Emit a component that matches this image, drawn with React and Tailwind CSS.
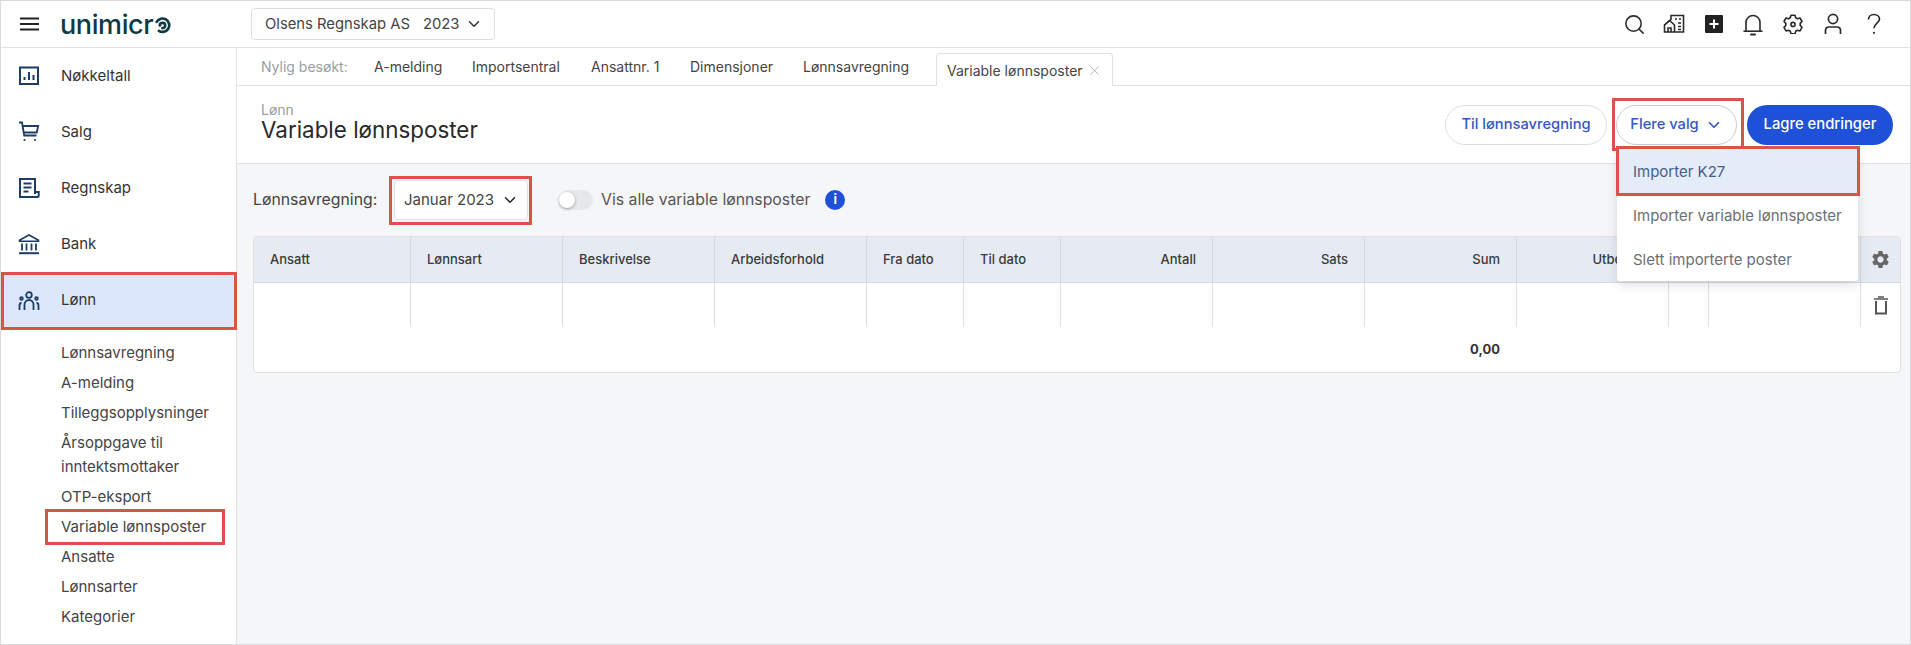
import { ChevronDown, Search, X } from "lucide-react";
import { MdSettings } from "react-icons/md";

const NAVY = "#1c3d66";

const RECENT = [
  { label: "A-melding", cls: "w-[98px]" },
  { label: "Importsentral", cls: "w-[119px]" },
  { label: "Ansattnr. 1", cls: "w-[99px]" },
  { label: "Dimensjoner", cls: "w-[113px]" },
  { label: "Lønnsavregning", cls: "w-[133px]" },
];

const COLUMNS = [
  { label: "Ansatt", cls: "w-[157px]" },
  { label: "Lønnsart", cls: "w-[152px]" },
  { label: "Beskrivelse", cls: "w-[152px]" },
  { label: "Arbeidsforhold", cls: "w-[152px]" },
  { label: "Fra dato", cls: "w-[97px]" },
  { label: "Til dato", cls: "w-[97px]" },
  { label: "Antall", cls: "w-[152px]", right: true },
  { label: "Sats", cls: "w-[152px]", right: true },
  { label: "Sum", cls: "w-[152px]", right: true },
  { label: "Utbetales", cls: "w-[152px]", right: true },
  { label: "", cls: "w-[40px]" },
  { label: "", cls: "w-[152px]" },
];

const SUBMENU = ["Lønnsavregning", "A-melding", "Tilleggsopplysninger", "Årsoppgave til inntektsmottaker", "OTP-eksport", "Variable lønnsposter", "Ansatte", "Lønnsarter", "Kategorier"];

function ChartIcon() {
  return (
    <svg width="22" height="20" viewBox="0 0 22 20" fill="none" stroke={NAVY} strokeWidth="2">
      <rect x="2" y="1.500" width="18" height="16.500" />
      <path d="M6.500 14v-3M11 14V6M15.500 14V9" />
    </svg>
  );
}

function CartIcon() {
  return (
    <svg width="22" height="22" viewBox="0 0 22 22" fill="none" stroke={NAVY} strokeWidth="1.800">
      <path d="M1 1.500h3l2.200 13h12.300" />
      <path d="M4.600 5h15.600l-1.500 6.500H5.700" />
      <circle cx="6.500" cy="19" r="1.100" fill={NAVY} stroke="none" />
      <circle cx="17" cy="19" r="1.100" fill={NAVY} stroke="none" />
    </svg>
  );
}

function LedgerIcon() {
  return (
    <svg width="22" height="22" viewBox="0 0 22 22" fill="none" stroke={NAVY} strokeWidth="2">
      <path d="M17 17V2H2v18h17.500c.8 0 1.200-.6 1.200-1.300V15H17" />
      <path d="M5.500 6.500h8M5.500 10.500h8M5.500 14.500h5" />
    </svg>
  );
}

function BankIcon() {
  return (
    <svg width="22" height="22" viewBox="0 0 22 22" fill="none" stroke={NAVY} strokeWidth="1.600">
      <path d="M1.500 7.200 11 2l9.500 5.200v1h-19z" />
      <path d="M4 10.500v7M8.500 10.500v7M13.500 10.500v7M18 10.500v7" strokeWidth="1.800" />
      <path d="M1 20.200h20" strokeWidth="2" />
    </svg>
  );
}

function PeopleIcon() {
  return (
    <svg width="22" height="22" viewBox="0 0 22 22" fill="none" stroke={NAVY} strokeWidth="1.800">
      <circle cx="11" cy="5" r="2.800" />
      <circle cx="3.500" cy="8.500" r="1.300" />
      <circle cx="18.500" cy="8.500" r="1.300" />
      <path d="M6.500 20v-5.500a4.500 4.500 0 0 1 9 0V20" />
      <path d="M1.500 20v-4.500c0-1.500.8-2.500 2-2.500M20.500 20v-4.500c0-1.500-.8-2.500-2-2.500" />
    </svg>
  );
}

const NAV = [
  { label: "Nøkkeltall", icon: <ChartIcon /> },
  { label: "Salg", icon: <CartIcon /> },
  { label: "Regnskap", icon: <LedgerIcon /> },
  { label: "Bank", icon: <BankIcon /> },
];

function CompanyIcon() {
  return (
    <svg width="22" height="20" viewBox="0 0 22 20" fill="none" stroke="#2a2a2a" strokeWidth="1.600">
      <path d="M8 5.500V1.500h12.500v16.500H1.500v-7z" />
      <path d="M1.500 11 6.500 6.500 11.500 11v7" />
      <path d="M5 18v-4h3v4" />
      <path d="M12 5h2M16 5h2M15 9h3M15 12.500h3M15 15.500h3" />
    </svg>
  );
}

function PlusBoxIcon() {
  return (
    <svg width="18" height="18" viewBox="0 0 18 18">
      <rect width="18" height="18" rx="1" fill="#222" />
      <path d="M9 4.500v9M4.500 9h9" stroke="#fff" strokeWidth="2" />
    </svg>
  );
}

function BellIcon() {
  return (
    <svg width="20" height="23" viewBox="0 0 20 23" fill="none" stroke="#2a2a2a" strokeWidth="1.600">
      <path d="M3 18V9.500a7 7 0 0 1 14 0V18" />
      <path d="M0.500 18.200h19" />
      <path d="M8 21.500h4" strokeWidth="2" strokeLinecap="round" />
    </svg>
  );
}

function GearOutlineIcon() {
  return (
    <svg width="20" height="20" viewBox="0 0 20 20" fill="none" stroke="#2a2a2a" strokeWidth="1.600" strokeLinejoin="round">
      <path d="M8 1.200h4l.7 2.500 1.800 1 2.500-.7 2 3.500-1.800 1.900v2.100l1.800 1.900-2 3.500-2.500-.7-1.800 1-.7 2.500H8l-.7-2.500-1.800-1-2.500.7-2-3.500 1.800-1.900V9.400L1 7.500l2-3.500 2.500.7 1.800-1z" />
      <circle cx="10" cy="10.400" r="2" />
    </svg>
  );
}

function UserIcon() {
  return (
    <svg width="20" height="22" viewBox="0 0 20 22" fill="none" stroke="#2a2a2a" strokeWidth="1.700">
      <circle cx="10" cy="6" r="4.600" />
      <path d="M2.500 21v-3.500c0-2 1.500-3.500 3.500-3.500h8c2 0 3.500 1.500 3.500 3.500V21" />
    </svg>
  );
}

function QuestionIcon() {
  return (
    <svg width="14" height="22" viewBox="0 0 14 22" fill="none" stroke="#2a2a2a" strokeWidth="1.700">
      <path d="M1.500 6.500C1.500 3.500 3.800 1.500 7 1.500s5.500 2 5.500 4.800c0 3.700-5.500 4.300-5.500 9" />
      <circle cx="7" cy="19.800" r="1.100" fill="#2a2a2a" stroke="none" />
    </svg>
  );
}

function TrashIcon() {
  return (
    <svg width="16" height="19" viewBox="0 0 16 19" fill="none" stroke="#555" strokeWidth="2">
      <path d="M3 5v12.500h10V5" />
      <path d="M1 3h14M5 1h6" strokeWidth="1.700" />
    </svg>
  );
}

function LogoSwirl() {
  return (
    <svg width="17" height="17" viewBox="0 0 19 19" fill="none" stroke="#0f3a44" strokeWidth="3" strokeLinecap="round" className="ml-[1px] mt-[3px]">
      <path d="M5.500 15.500A7.500 7.500 0 1 0 3 5.500" />
      <path d="M9.500 12.500a3 3 0 1 0-3-3" />
    </svg>
  );
}

export default function App() {
  return (
    <div className="w-[1911px] h-[645px] flex flex-col border border-[#d9dbdd] bg-white overflow-hidden font-['Inter',sans-serif] text-[#333]">
      {/* top bar */}
      <header className="h-[47px] shrink-0 flex items-center border-b border-[#dfe1e4]">
        <div className="w-[250px] flex items-center shrink-0">
          <svg width="19" height="14" viewBox="0 0 19 14" stroke="#222" strokeWidth="1.800" className="ml-[19px]">
            <path d="M0 1.500h19M0 7h19M0 12.500h19" />
          </svg>
          <div className="ml-[21px] flex items-center text-[#0f3a44] text-[27px] leading-none font-medium tracking-[-0.4px]">
            unimicr
            <LogoSwirl />
          </div>
        </div>
        <div className="w-[244px] h-[32px] flex items-center border border-[#dcdfe3] rounded-[4px] pl-[13px] text-[14.800px] text-[#444]">
          <span>Olsens Regnskap AS</span>
          <span className="ml-[13px]">2023</span>
          <ChevronDown size={18} strokeWidth={2} className="ml-[5px] text-[#333]" />
        </div>
        <div className="ml-auto flex items-center mr-[29px]">
          <Search size={23} strokeWidth={1.600} className="text-[#2a2a2a] mr-[17px]" />
          <span className="mr-[20px]"><CompanyIcon /></span>
          <span className="mr-[20px]"><PlusBoxIcon /></span>
          <span className="mr-[20px]"><BellIcon /></span>
          <span className="mr-[20px]"><GearOutlineIcon /></span>
          <span className="mr-[24px]"><UserIcon /></span>
          <QuestionIcon />
        </div>
      </header>

      <div className="flex flex-1 min-h-0">
        {/* sidebar */}
        <aside className="w-[236px] shrink-0 border-r border-[#dfe1e4] bg-white">
          {NAV.map(item => (
            <div key={item.label} className="h-[56px] flex items-center text-[15px]">
              <span className="w-[60px] pl-[17px] flex items-center shrink-0">{item.icon}</span>
              {item.label}
            </div>
          ))}
          <div className="h-[58px] w-[236px] flex items-center border-[3px] border-[#d9534a] bg-[#dce7fb] pb-[1px] text-[15px]">
            <span className="w-[57px] pl-[14px] flex items-center shrink-0"><PeopleIcon /></span>
            Lønn
          </div>
          <ul className="pt-[8px] text-[15px] leading-[24px] text-[#444]">
            {SUBMENU.map(label => (
              <li key={label} className="relative pl-[60px] pr-[20px] py-[3px]">
                {label}
                {label === "Variable lønnsposter" && (
                  <span className="absolute left-[44px] top-[-3px] w-[180px] h-[36px] border-[3px] border-[#d9534a]" />
                )}
              </li>
            ))}
          </ul>
        </aside>

        <main className="flex-1 min-w-0 flex flex-col bg-[#f5f6f8]">
          {/* recently visited */}
          <nav className="h-[38px] shrink-0 flex bg-white border-b border-[#dfe1e4] pl-[24px] text-[14px]">
            <span className="w-[113px] h-[37px] flex items-center text-[#9a9ea3]">Nylig besøkt:</span>
            {RECENT.map(tab => (
              <span key={tab.label} className={`${tab.cls} h-[37px] flex items-center text-[#444]`}>{tab.label}</span>
            ))}
            <span className="mt-[5px] w-[177px] h-[33px] flex items-center justify-between pl-[10px] pr-[10px] bg-white border border-b-0 border-[#dfe1e4] rounded-t-[4px] text-[#444]">
              Variable lønnsposter
              <X size={15} strokeWidth={1.300} className="text-[#a5a8ac]" />
            </span>
          </nav>

          {/* page title */}
          <section className="h-[78px] shrink-0 flex items-center justify-between bg-white border-b border-[#dfe1e4] pl-[24px] pr-[17px]">
            <div className="-mt-[8px]">
              <div className="text-[14px] leading-[18px] text-[#9a9ea3]">Lønn</div>
              <h1 className="text-[22.400px] leading-[22px] text-[#2a2a2a]">Variable lønnsposter</h1>
            </div>
            <div className="flex items-center">
              <button className="w-[162px] h-[40px] rounded-full border border-[#dcdfe3] bg-white text-[14.700px] font-medium text-[#3556c4]">
                Til lønnsavregning
              </button>
              <div className="relative ml-[9px]">
                <button className="w-[121px] h-[40px] rounded-full border border-[#c9ccd0] bg-white text-[14.700px] font-medium text-[#3556c4] flex items-center justify-center gap-[6px]">
                  Flere valg
                  <ChevronDown size={18} strokeWidth={2.300} />
                </button>
                <span className="absolute left-[-4px] top-[-7px] w-[132px] h-[53px] border-[3px] border-[#d9534a]" />
                {/* dropdown */}
                <div className="absolute z-10 left-[1px] top-[44px] w-[241px] bg-white rounded-[3px] shadow-[0_4px_12px_rgba(0,0,0,0.12)] text-[15px] text-[#6b6f74]">
                  <div className="h-[44px] flex items-center pl-[16px] pt-[4px] bg-[#e4ecf8] text-[#44608c]">Importer K27</div>
                  <div className="h-[44px] flex items-center pl-[16px] pt-[4px]">Importer variable lønnsposter</div>
                  <div className="h-[44px] flex items-center pl-[16px] pt-[4px]">Slett importerte poster</div>
                  <span className="absolute left-[-1px] top-[-3px] w-[244px] h-[50px] border-[3px] border-[#d9534a]" />
                </div>
              </div>
              <button className="ml-[10px] w-[146px] h-[40px] rounded-full bg-[#1f50d8] text-[14.800px] font-medium text-white">
                Lagre endringer
              </button>
            </div>
          </section>

          {/* filter row */}
          <div className="h-[72px] shrink-0 flex items-center pl-[16px]">
            <span className="w-[126px] text-[15.800px] text-[#444]">Lønnsavregning:</span>
            <div className="ml-[15px] relative w-[134px] h-[40px] flex items-center justify-between pl-[9px] pr-[8px] bg-white border border-[#dcdfe3] rounded-[4px] text-[15px] text-[#444]">
              Januar 2023
              <ChevronDown size={18} strokeWidth={2} className="text-[#222]" />
              <span className="absolute left-[-6px] top-[-5px] w-[143px] h-[49px] border-[3px] border-[#d9534a]" />
            </div>
            <div className="ml-[31px] relative w-[34px] h-[20px] rounded-full bg-[#e6e8eb]">
              <span className="absolute left-0 top-[2px] w-[16px] h-[16px] rounded-full bg-white shadow-[0_1px_3px_rgba(0,0,0,0.35)]" />
            </div>
            <span className="ml-[8px] text-[15.800px] text-[#555]">Vis alle variable lønnsposter</span>
            <span className="ml-[15px] w-[20px] h-[20px] rounded-full bg-[#1f50d8] text-white text-[13px] font-bold flex items-center justify-center">i</span>
          </div>

          {/* table */}
          <div className="ml-[16px] mr-[9px] h-[137px] bg-white border border-[#dfe1e4] rounded-[4px] overflow-hidden">
            <div className="h-[46px] flex bg-[#e6ebf3] border-b border-[#d6dae0] text-[13px] text-[#3a3a3a] font-medium">
              {COLUMNS.map((col, i) => (
                <div key={i} className={`${col.cls} shrink-0 border-r border-[#d6dae0] flex items-center px-[16px] ${col.right ? "justify-end" : ""}`}>
                  {col.label}
                </div>
              ))}
              <div className="flex-1 flex items-center justify-center">
                <MdSettings size={21} className="text-[#666]" />
              </div>
            </div>
            <div className="h-[44px] flex">
              {COLUMNS.map((col, i) => (
                <div key={i} className={`${col.cls} shrink-0 border-r border-[#dcdfe3]`} />
              ))}
              <div className="flex-1 flex items-center justify-center"><TrashIcon /></div>
            </div>
            <div className="h-[45px] flex items-center">
              <span className="ml-[1188px] w-[58px] text-right text-[13px] font-bold text-[#333]">0,00</span>
            </div>
          </div>
        </main>
      </div>
    </div>
  );
}
